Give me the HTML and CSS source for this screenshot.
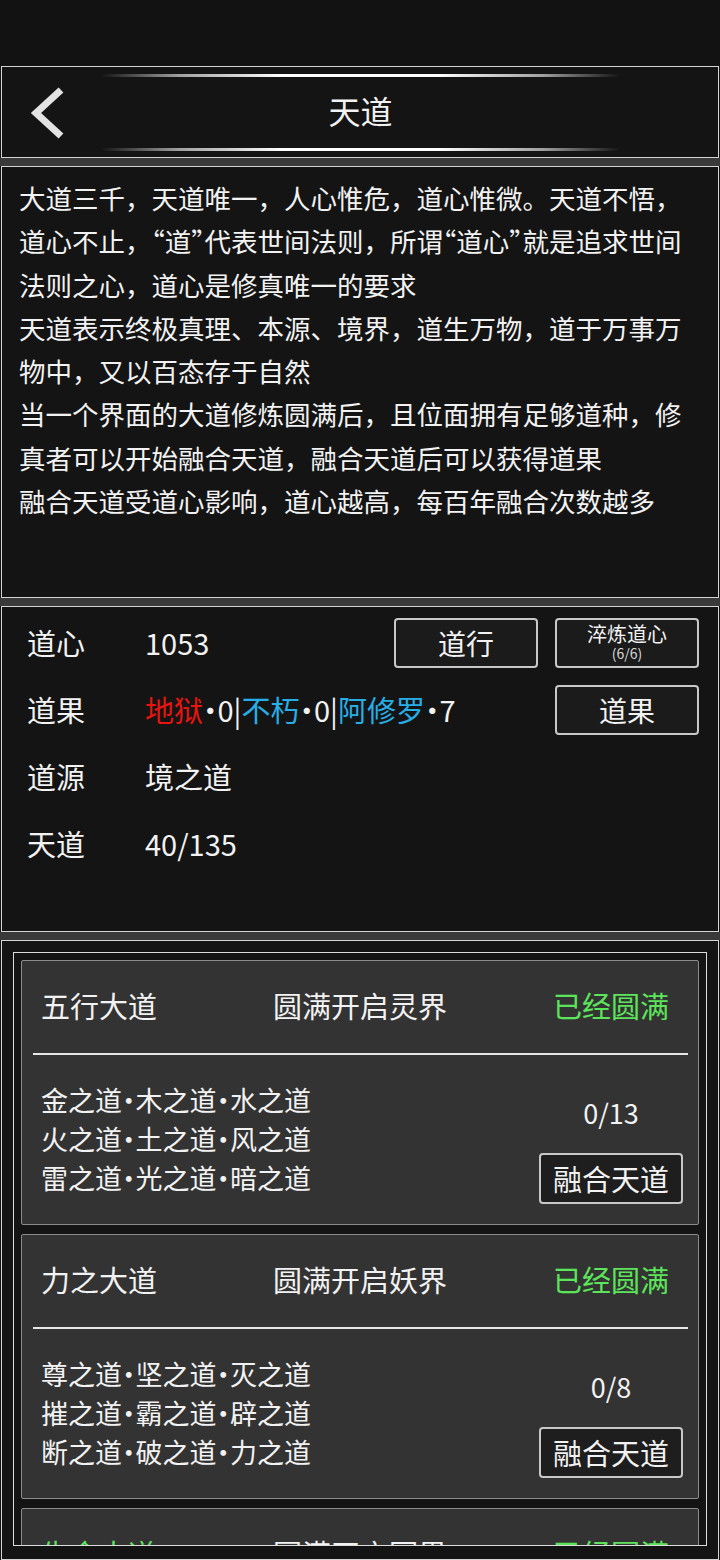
FILE: index.html
```html
<!DOCTYPE html>
<html lang="zh-CN">
<head>
    <meta charset="UTF-8">
    <meta name="viewport" content="width=device-width, initial-scale=1.0">
    <title>天道</title>
    <link rel="stylesheet" href="styles.css">
</head>
<body>
    <div class="statusbar"></div>

    <div class="panel header">
        <div class="back">
            <svg width="40" height="56" viewBox="0 0 40 56">
                <polyline points="33,4 8,27 33,50" fill="none" stroke="#e2e2e2" stroke-width="7" stroke-linecap="butt" stroke-linejoin="miter"/>
            </svg>
        </div>
        <div class="title-wrap">
            <div class="deco"></div>
            <h1>天道</h1>
            <div class="deco"></div>
        </div>
        <div></div>
    </div>

    <div class="band"></div>

    <div class="panel intro">
        <p>大道三千，天道唯一，人心惟危，道心惟微。天道不悟，道心不止，<span class="q">“</span>道<span class="q">”</span>代表世间法则，所谓<span class="q">“</span>道心<span class="q">”</span>就是追求世间法则之心，道心是修真唯一的要求</p>
        <p>天道表示终极真理、本源、境界，道生万物，道于万事万物中，又以百态存于自然</p>
        <p>当一个界面的大道修炼圆满后，且位面拥有足够道种，修真者可以开始融合天道，融合天道后可以获得道果</p>
        <p>融合天道受道心影响，道心越高，每百年融合次数越多</p>
    </div>

    <div class="band"></div>

    <div class="panel stats">
        <div class="row">
            <span class="label">道心</span>
            <span class="value">1053</span>
            <div class="actions">
                <button class="btn">道行</button>
                <button class="btn small">淬炼道心<span>(6/6)</span></button>
            </div>
        </div>
        <div class="row">
            <span class="label">道果</span>
            <span class="value"><span class="red">地狱</span>·0|<span class="blue">不朽</span>·0|<span class="blue">阿修罗</span>·7</span>
            <div class="actions">
                <button class="btn">道果</button>
            </div>
        </div>
        <div class="row">
            <span class="label">道源</span>
            <span class="value">境之道</span>
        </div>
        <div class="row">
            <span class="label">天道</span>
            <span class="value">40/135</span>
        </div>
    </div>

    <div class="band"></div>

    <div class="panel list">
        <div class="frame">
            <div class="card">
                <div class="card-head">
                    <span>五行大道</span>
                    <span class="mid">圆满开启灵界</span>
                    <span class="green end">已经圆满</span>
                </div>
                <div class="divider"></div>
                <div class="card-body">
                    <div class="ways">
                        <div>金之道·木之道·水之道</div>
                        <div>火之道·土之道·风之道</div>
                        <div>雷之道·光之道·暗之道</div>
                    </div>
                    <div class="fuse">
                        <div class="count">0/13</div>
                        <button class="btn fuse-btn">融合天道</button>
                    </div>
                </div>
            </div>

            <div class="card">
                <div class="card-head">
                    <span>力之大道</span>
                    <span class="mid">圆满开启妖界</span>
                    <span class="green end">已经圆满</span>
                </div>
                <div class="divider"></div>
                <div class="card-body">
                    <div class="ways">
                        <div>尊之道·坚之道·灭之道</div>
                        <div>摧之道·霸之道·辟之道</div>
                        <div>断之道·破之道·力之道</div>
                    </div>
                    <div class="fuse">
                        <div class="count">0/8</div>
                        <button class="btn fuse-btn">融合天道</button>
                    </div>
                </div>
            </div>

            <div class="card">
                <div class="card-head">
                    <span class="green">生命大道</span>
                    <span class="mid">圆满开启冥界</span>
                    <span class="green end">已经圆满</span>
                </div>
            </div>
        </div>
    </div>
</body>
</html>
```

FILE: styles.css
```css
body {
    margin: 0;
    background-color: #141414;
    color: #f2f2f2;
    font-family: "Noto Sans CJK SC", sans-serif;
    overflow: hidden;
}

.statusbar {
    height: 66px;
    background-color: #121212;
}

.panel {
    box-sizing: border-box;
    margin: 0 1px;
    border: 1px solid #d4d4d4;
    background-color: #141414;
}

.band {
    height: 8px;
    background-color: #3a3a3a;
}

/* header */
.header {
    height: 92px;
    display: grid;
    grid-template-columns: 99px 1fr 98px;
}

.back {
    padding: 19px 0 0 26px;
}

.title-wrap {
    display: flex;
    flex-direction: column;
    justify-content: space-between;
    padding: 7px 0 6px;
}

.deco {
    height: 3px;
    background: linear-gradient(to right, rgba(255,255,255,0) 0%, rgba(255,255,255,0.6) 15%, #fff 35%, #fff 65%, rgba(255,255,255,0.6) 85%, rgba(255,255,255,0) 100%);
}

h1 {
    margin: 0 0 6px;
    font-size: 32px;
    font-weight: 400;
    text-align: center;
    line-height: 40px;
}

/* intro text */
.intro {
    height: 432px;
    padding: 9px 28px 0 17px;
}

.intro p {
    margin: 0;
    font-size: 26.5px;
    line-height: 43.3px;
}

.q {
    font-feature-settings: "halt";
}

/* stats */
.stats {
    height: 326px;
    padding: 1px 19px 0 25px;
}

.row {
    height: 67px;
    display: flex;
    align-items: center;
    font-size: 29px;
}

.label {
    width: 118px;
}

.value {
    flex: 1;
    font-feature-settings: "halt";
}

.red {
    color: #e8140f;
}

.blue {
    color: #27aee6;
}

.green {
    color: #5ce45a;
}

.actions {
    display: flex;
    gap: 17px;
    margin-top: 3px;
}

.btn {
    box-sizing: border-box;
    width: 144px;
    height: 50px;
    padding: 0;
    border: 2px solid #c8c8c8;
    border-radius: 4px;
    background-color: #1b1b1b;
    color: #f2f2f2;
    font-family: inherit;
    font-size: 28px;
    line-height: 1;
}

.btn.small {
    font-size: 20px;
    display: flex;
    flex-direction: column;
    align-items: center;
    justify-content: center;
    line-height: 22px;
    padding-bottom: 2px;
}

.btn.small span {
    font-size: 14px;
    line-height: 16px;
    color: #d8d8d8;
}

/* list */
.list {
    height: 620px;
    padding: 11px;
}

.frame {
    box-sizing: border-box;
    height: 594px;
    border: 1px solid #dcdcdc;
    padding: 7px;
    overflow: hidden;
    display: flex;
    flex-direction: column;
    gap: 9px;
}

.card {
    flex-shrink: 0;
    border: 1px solid #8c8c8c;
    border-radius: 2px;
    background-color: #333;
}

.card-head {
    box-sizing: border-box;
    height: 92px;
    display: grid;
    grid-template-columns: 1fr auto 1fr;
    align-items: center;
    padding: 0 19px 4px;
    font-size: 29px;
}

.card-head .mid {
    text-align: center;
}

.card-head .end {
    justify-self: end;
    padding-right: 10px;
}

.divider {
    height: 2px;
    margin: 0 10px 0 11px;
    background-color: #e6e6e6;
}

.card-body {
    height: 169px;
    box-sizing: border-box;
    display: flex;
    justify-content: space-between;
    padding: 25px 15px 0 19px;
}

.ways {
    font-size: 27px;
    line-height: 39px;
    font-feature-settings: "halt";
}

.fuse {
    display: flex;
    flex-direction: column;
    align-items: center;
    padding-top: 13px;
}

.count {
    font-size: 27px;
    line-height: 39px;
}

.fuse-btn {
    margin-top: 21px;
    height: 51px;
    background-color: #1e1e1e;
    font-size: 29px;
}
```
